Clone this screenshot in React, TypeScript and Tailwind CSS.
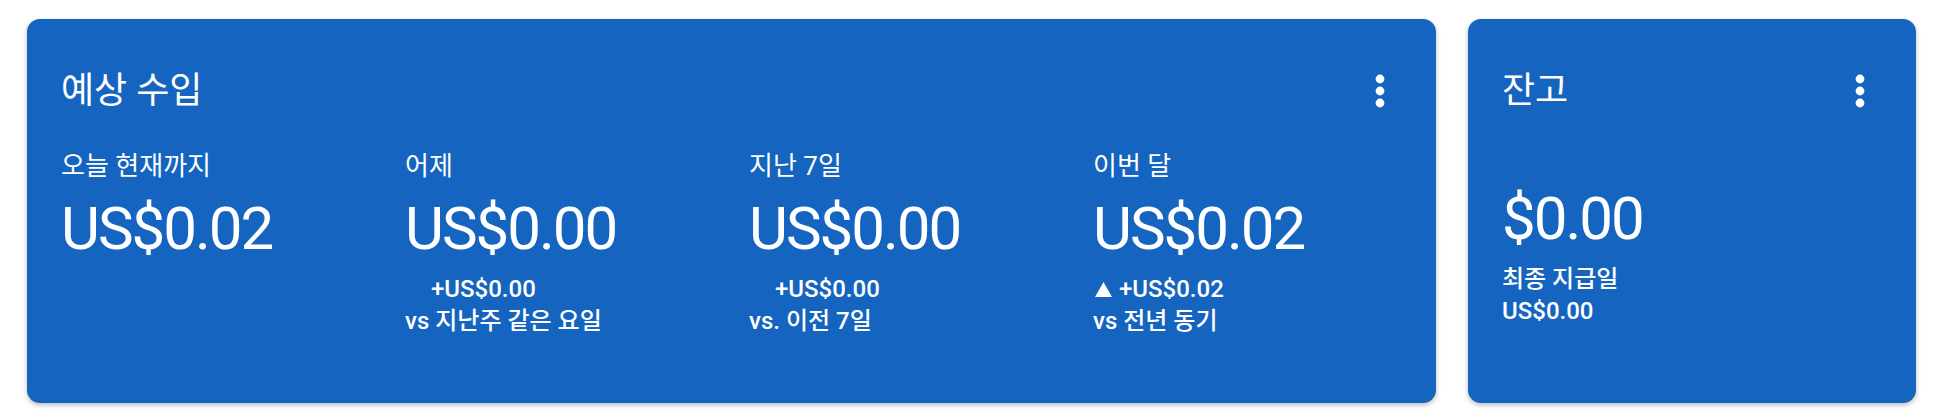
import React from "react";

const font = { fontFamily: "Roboto, 'Noto Sans CJK KR', sans-serif" };

function MoreIcon() {
    return (
        <button className="flex h-12 w-12 items-center justify-center">
            <svg width="48" height="48" viewBox="0 0 24 24" fill="white">
                <circle cx="12" cy="6" r="2.2" />
                <circle cx="12" cy="12" r="2.2" />
                <circle cx="12" cy="18" r="2.2" />
            </svg>
        </button>
    );
}

type Stat = {
    label: string;
    value: string;
    delta?: string;
    up?: boolean;
    compare?: string;
};

const stats: Stat[] = [
    { label: "오늘 현재까지", value: "US$0.02" },
    { label: "어제", value: "US$0.00", delta: "+US$0.00", compare: "vs 지난주 같은 요일" },
    { label: "지난 7일", value: "US$0.00", delta: "+US$0.00", compare: "vs. 이전 7일" },
    { label: "이번 달", value: "US$0.02", delta: "+US$0.02", up: true, compare: "vs 전년 동기" },
];

function StatColumn({ s }: { s: Stat }) {
    return (
        <div className="flex flex-col">
            <div className="mt-[35px] text-[26px] leading-[32px]">{s.label}</div>
            <div className="mt-[17px] text-[60px] leading-[60px] tracking-[-2px]">{s.value}</div>
            {s.delta && (
                <div className="mt-[14px] text-[24px] font-medium leading-[32px]">
                    <div className="flex items-center gap-[6px]">
                        <span className="flex w-5 justify-center">
                            {s.up && (
                                <svg width="17" height="15" viewBox="0 0 17 15" fill="white">
                                    <path d="M8.5 0 L17 15 L0 15 Z" />
                                </svg>
                            )}
                        </span>
                        <span>{s.delta}</span>
                    </div>
                    <div>{s.compare}</div>
                </div>
            )}
        </div>
    );
}

export default function App() {
    return (
        <div className="flex h-[416px] w-[1938px] gap-8 bg-white pl-[27px] pr-[22px] pt-[19px] text-white" style={font}>
            {/* 예상 수입 */}
            <div className="h-[384px] min-w-0 flex-1 rounded-[13px] bg-[#1565c0] pl-[34px] pr-[32px] pt-12 shadow-[0_2px_5px_rgba(0,0,0,0.28)]">
                <div className="flex h-12 items-center justify-between">
                    <h2 className="text-[36px] leading-[48px]">예상 수입</h2>
                    <MoreIcon />
                </div>
                <div className="grid grid-cols-[repeat(4,344px)]">
                    {stats.map((s) => (
                        <StatColumn key={s.label} s={s} />
                    ))}
                </div>
            </div>

            {/* 잔고 */}
            <div className="h-[384px] w-[448px] shrink-0 rounded-[13px] bg-[#1565c0] pl-[34px] pr-[32px] pt-12 shadow-[0_2px_5px_rgba(0,0,0,0.28)]">
                <div className="flex h-12 items-center justify-between">
                    <h2 className="text-[36px] leading-[48px]">잔고</h2>
                    <MoreIcon />
                </div>
                <div className="mt-[74px] text-[60px] leading-[60px] tracking-[-2px]">$0.00</div>
                <div className="mt-[14px] text-[24px] font-medium leading-[32px]">
                    <div>최종 지급일</div>
                    <div>US$0.00</div>
                </div>
            </div>
        </div>
    );
}
